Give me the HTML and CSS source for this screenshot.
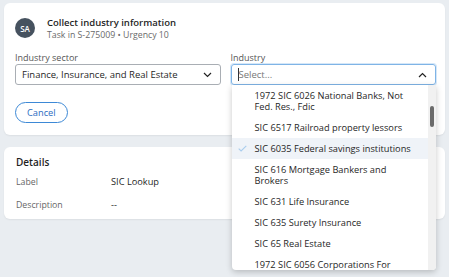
FILE: index.html
```html
<!DOCTYPE html>
<html lang="en">
<head>
<meta charset="UTF-8">
<title>Collect industry information</title>
<link rel="stylesheet" href="styles.css">
</head>
<body>
<div class="card task-card">
    <div class="task-header">
        <div class="avatar">SA</div>
        <div class="task-text">
            <div class="task-title">Collect industry information</div>
            <div class="task-sub">Task in S-275009 • Urgency 10</div>
        </div>
    </div>
    <div class="fields">
        <div class="field">
            <div class="field-label">Industry sector</div>
            <div class="select">
                <span>Finance, Insurance, and Real Estate</span>
                <svg class="chev" width="9" height="6" viewBox="0 0 9 6"><path d="M1 1l3.5 3.5L8 1" fill="none" stroke="#222" stroke-width="1.2"/></svg>
            </div>
        </div>
        <div class="field combo">
            <div class="field-label">Industry</div>
            <div class="select focused">
                <span class="caret"></span><span class="placeholder">Select...</span>
                <svg class="chev" width="9" height="6" viewBox="0 0 9 6"><path d="M1 5l3.5-3.5L8 5" fill="none" stroke="#222" stroke-width="1.2"/></svg>
            </div>
            <div class="listbox">
                <ul class="options">
                    <li>1972 SIC 6026 National Banks, Not Fed. Res., Fdic</li>
                    <li>SIC 6517 Railroad property lessors</li>
                    <li class="selected"><svg class="check" width="9" height="7" viewBox="0 0 9 7"><path d="M0.7 3.6l2.4 2.4L8.3 0.8" fill="none" stroke="#a9cdee" stroke-width="1.1"/></svg>SIC 6035 Federal savings institutions</li>
                    <li>SIC 616 Mortgage Bankers and Brokers</li>
                    <li>SIC 631 Life Insurance</li>
                    <li>SIC 635 Surety Insurance</li>
                    <li>SIC 65 Real Estate</li>
                    <li>1972 SIC 6056 Corporations For</li>
                </ul>
                <div class="scroll-track"><div class="scroll-thumb"></div></div>
            </div>
        </div>
    </div>
    <button class="cancel-btn">Cancel</button>
</div>

<div class="card details-card">
    <div class="details-title">Details</div>
    <div class="details-row">
        <span class="details-key">Label</span>
        <span class="details-val">SIC Lookup</span>
    </div>
    <div class="details-row">
        <span class="details-key">Description</span>
        <span class="details-val">--</span>
    </div>
</div>
</body>
</html>
```

FILE: styles.css
```css
html {
    height: 100%;
}
body {
    margin: 0;
    padding: 3px 4px;
    min-height: 100%;
    box-sizing: border-box;
    background-color: #e9edf1;
    font-family: "Open Sans", "Noto Sans", sans-serif;
    font-size: 9px;
    color: #1f1f1f;
}
.card {
    background-color: #fff;
    border-radius: 6px;
    box-shadow: 0 1px 2px rgba(0, 0, 0, 0.06);
}
.task-card {
    padding: 15px 9px 12px 11px;
}
.task-header {
    display: flex;
    align-items: center;
    gap: 12px;
    height: 20px;
}
.avatar {
    width: 20px;
    height: 20px;
    border-radius: 50%;
    background-color: #46525f;
    color: #fff;
    font-size: 8px;
    font-weight: 600;
    display: flex;
    align-items: center;
    justify-content: center;
}
.task-text {
    padding-top: 2px;
}
.task-title {
    font-size: 9.5px;
    font-weight: 600;
    line-height: 12px;
}
.task-sub {
    color: #6a6a6a;
    font-size: 8.75px;
    line-height: 12px;
}
.fields {
    display: grid;
    grid-template-columns: 1fr 1fr;
    gap: 10px;
    margin-top: 13px;
}
.field {
    position: relative;
}
.field-label {
    color: #555;
    line-height: 13px;
}
.select {
    height: 21px;
    box-sizing: border-box;
    border: 1px solid #a9aeb4;
    border-radius: 3px;
    display: flex;
    align-items: center;
    padding: 0 8px 0 6px;
    font-size: 9.5px;
}
.select span {
    flex: 1;
}
.select .chev {
    flex: none;
}
.select.focused {
    border-color: #7fb4e6;
    box-shadow: 0 0 0 1px #d5e7f8;
}
.select .caret {
    flex: none;
    width: 1px;
    height: 13px;
    background-color: #333;
}
.select .placeholder {
    color: #777;
}
.listbox {
    position: absolute;
    top: 100%;
    left: 1px;
    right: 0;
    height: 185px;
    overflow: hidden;
    background-color: #fff;
    border-radius: 0 0 4px 4px;
    box-shadow: 0 2px 6px rgba(0, 0, 0, 0.22);
    z-index: 10;
}
.options {
    list-style: none;
    margin: 0;
    padding: 0;
    width: 197px;
}
.options li {
    position: relative;
    padding: 5px 12px 5px 23px;
    line-height: 11px;
    font-size: 9.25px;
}
.options li.selected {
    background-color: #eff3f8;
}
.check {
    position: absolute;
    left: 6px;
    top: 7px;
}
.scroll-track {
    position: absolute;
    top: 0;
    right: 0;
    width: 8px;
    height: 100%;
    background-color: #f1f1f1;
}
.scroll-thumb {
    margin: 21px 0 0 2px;
    width: 4px;
    height: 21px;
    border-radius: 2px;
    background-color: #6a6a6a;
}
.cancel-btn {
    display: block;
    margin-top: 17px;
    height: 21px;
    padding: 0 11px;
    border: 1px solid #3d89d6;
    border-radius: 11px;
    background-color: #fff;
    color: #2a6cbf;
    font-family: inherit;
    font-size: 9.25px;
}
.details-card {
    margin-top: 12px;
    padding: 8px 12px 7px 12px;
}
.details-title {
    font-size: 10px;
    font-weight: 600;
    line-height: 14px;
}
.details-row {
    display: flex;
    line-height: 14px;
    margin-top: 6px;
}
.details-row + .details-row {
    margin-top: 9px;
}
.details-key {
    width: 95px;
    color: #666;
    font-size: 8.75px;
}
.details-val {
    font-size: 9.25px;
}
```
